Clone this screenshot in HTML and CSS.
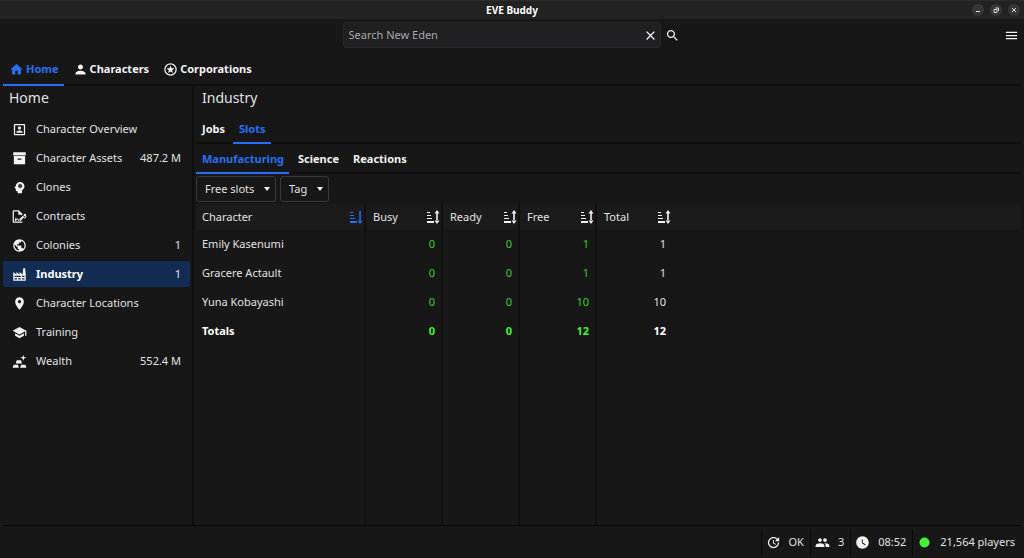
FILE: index.html
```html
<!DOCTYPE html>
<html lang="en">
<head>
    <meta charset="UTF-8">
    <meta name="viewport" content="width=device-width, initial-scale=1.0">
    <title>EVE Buddy</title>
    <link rel="stylesheet" href="styles.css">
</head>
<body>
    <!-- Shared icons -->
    <svg class="sprite" aria-hidden="true">
        <symbol id="sort" viewBox="0 0 14 14">
            <path d="M1 2h3v1H1zM1 5h4v1H1zM1 8h5v1H1zM1 11h7v2H1z"/>
            <path d="M10.200 3h1.600v8h-1.600zM11 0l2.500 3.500h-5zM11 14l2.500-3.500h-5z"/>
        </symbol>
        <symbol id="sort-down" viewBox="0 0 14 14">
            <path d="M1 2h3v1H1zM1 5h4v1H1zM1 8h5v1H1zM1 11h7v2H1z"/>
            <path d="M10.300 1h1.500v10h-1.500zM11 14l2.500-3.500h-5z"/>
        </symbol>
    </svg>

    <header class="titlebar">
        <h1>EVE Buddy</h1>
        <div class="window-buttons">
            <button type="button" aria-label="Minimize"><svg viewBox="0 0 12 12"><path d="M4 7.500h4"/></svg></button>
            <button type="button" aria-label="Restore"><svg viewBox="0 0 12 12"><path d="M4 5.500h3v3H4zM5.500 4h3v3"/></svg></button>
            <button type="button" aria-label="Close"><svg viewBox="0 0 12 12"><path d="M4 4l4 4M8 4l-4 4"/></svg></button>
        </div>
    </header>

    <div class="toolbar">
        <form class="search">
            <div class="search-box">
                <input type="text" aria-label="Search" placeholder="Search New Eden">
                <button type="reset" class="icon-button" aria-label="Clear"><svg class="icon" viewBox="0 0 24 24"><path d="M19 6.410L17.590 5 12 10.590 6.410 5 5 6.410 10.590 12 5 17.590 6.410 19 12 13.410 17.590 19 19 17.590 13.410 12z"/></svg></button>
            </div>
            <button type="button" class="icon-button" aria-label="Search"><svg class="icon" viewBox="0 0 24 24"><path d="M15.500 14h-.79l-.28-.27C15.410 12.590 16 11.110 16 9.500 16 5.910 13.090 3 9.500 3S3 5.910 3 9.500 5.910 16 9.500 16c1.610 0 3.090-.59 4.230-1.570l.27.28v.79l5 4.990L20.490 19l-4.990-5zm-6 0C7.010 14 5 11.990 5 9.500S7.010 5 9.500 5 14 7.010 14 9.500 11.990 14 9.500 14z"/></svg></button>
        </form>
        <button type="button" class="icon-button" aria-label="Menu"><svg class="icon" viewBox="0 0 24 24"><path d="M3 18h18v-2H3v2zm0-5h18v-2H3v2zm0-7v2h18V6H3z"/></svg></button>
    </div>

    <nav class="tabs main-tabs">
        <button type="button" class="tab active"><svg class="icon" viewBox="0 0 24 24"><path d="M10 20v-6h4v6h5v-8h3L12 3 2 12h3v8z"/></svg>Home</button>
        <button type="button" class="tab"><svg class="icon" viewBox="0 0 24 24"><path d="M12 12c2.210 0 4-1.790 4-4s-1.790-4-4-4-4 1.790-4 4 1.790 4 4 4zm0 2c-2.670 0-8 1.340-8 4v2h16v-2c0-2.660-5.330-4-8-4z"/></svg>Characters</button>
        <button type="button" class="tab"><svg class="icon" viewBox="0 0 24 24"><circle cx="12" cy="12" r="9" fill="none" stroke="currentColor" stroke-width="2"/><path d="M12 5.500l1.700 4.300 4.600.3-3.600 2.900 1.200 4.500-3.900-2.500-3.900 2.500 1.200-4.500-3.600-2.900 4.600-.3z"/></svg>Corporations</button>
    </nav>

    <div class="page">
        <aside class="sidebar">
            <h2>Home</h2>
            <nav class="menu">
                <a href="#"><svg class="icon" viewBox="0 0 24 24"><path d="M19 5v14H5V5h14m0-2H5c-1.100 0-2 .9-2 2v14c0 1.100.9 2 2 2h14c1.100 0 2-.9 2-2V5c0-1.100-.9-2-2-2z"/><path d="M12 12c1.400 0 2.500-1.100 2.500-2.500S13.400 7 12 7 9.500 8.100 9.500 9.500 10.600 12 12 12zM17 17v-1c0-1.800-3.300-2.600-5-2.600S7 14.200 7 16v1z"/></svg><span>Character Overview</span></a>
                <a href="#"><svg class="icon" viewBox="0 0 24 24"><path d="M2 2h20v5H2z"/><path fill-rule="evenodd" d="M3 8h18v13H3zM9 12v2h6v-2z"/></svg><span>Character Assets</span><span>487.2 M</span></a>
                <a href="#"><svg class="icon" viewBox="0 0 24 24"><path fill-rule="evenodd" d="M13 3C9.230 3 6.190 5.950 6 9.660L4.080 12.190C3.840 12.500 4.080 13 4.500 13H6V16C6 17.110 6.890 18 8 18H9V21H16V16.310C18.370 15.190 20 12.800 20 10C20 6.140 16.880 3 13 3M12.300 6h1.400l.4 1.500 1.500-.5.8 1.300-1.100 1.200 1.100 1.200-.8 1.300-1.500-.5-.4 1.500h-1.400l-.4-1.500-1.500.5-.8-1.300 1.100-1.200-1.100-1.200.8-1.300 1.500.5zM13 8.600a.9.9 0 1 0 0 1.800.9.9 0 0 0 0-1.800z"/></svg><span>Clones</span></a>
                <a href="#"><svg class="icon" viewBox="0 0 24 24"><path d="M19.700 12.900L14 18.600H11.700V16.300L17.400 10.600L19.700 12.900M23.100 12.100C23.100 12.400 22.800 12.700 22.500 13L20 15.500L19.100 14.600L21.700 12L21.100 11.400L20.400 12.100L18.100 9.800L20.300 7.700C20.500 7.500 20.900 7.500 21.200 7.700L22.600 9.100C22.800 9.300 22.800 9.700 22.600 10C22.400 10.200 22.200 10.400 22.200 10.600C22.200 10.800 22.400 11 22.600 11.200C22.900 11.500 23.200 11.800 23.100 12.100M3 20V4H10V9H15V10.500L17 8.500V8L11 2H3C1.900 2 1 2.900 1 4V20C1 21.100 1.900 22 3 22H15C16.100 22 17 21.100 17 20H3M11 17.100C10.800 17.100 10.600 17.200 10.500 17.200L10 15H8.500L6.400 16.700L7 14H5.500L4.500 19H6L8.900 16.400L9.500 18.700H10.500L11 18.600V17.100Z"/></svg><span>Contracts</span></a>
                <a href="#"><svg class="icon" viewBox="0 0 24 24"><path d="M12 2C6.480 2 2 6.480 2 12s4.480 10 10 10 10-4.480 10-10S17.520 2 12 2zm-1 17.930c-3.950-.49-7-3.850-7-7.930 0-.62.08-1.210.21-1.790L9 15v1c0 1.100.9 2 2 2v1.930zm6.900-2.540c-.26-.81-1-1.390-1.900-1.390h-1v-3c0-.55-.45-1-1-1H8v-2h2c.55 0 1-.45 1-1V7h2c1.100 0 2-.9 2-2v-.41c2.930 1.190 5 4.060 5 7.410 0 2.080-.8 3.970-2.100 5.390z"/></svg><span>Colonies</span><span>1</span></a>
                <a href="#" class="active"><svg class="icon" viewBox="0 0 24 24"><path d="M4 18V20H8V18H4M4 14V16H14V14H4M10 18V20H14V18H10M16 14V16H20V14H16M16 18V20H20V18H16M2 22V8L7 12V8L12 12V8L17 12L18 2H21L22 12V22H2Z"/></svg><span>Industry</span><span>1</span></a>
                <a href="#"><svg class="icon" viewBox="0 0 24 24"><path d="M12 2C8.130 2 5 5.130 5 9c0 5.250 7 13 7 13s7-7.750 7-13c0-3.870-3.130-7-7-7zm0 9.500c-1.380 0-2.500-1.120-2.500-2.500s1.120-2.500 2.500-2.500 2.500 1.120 2.500 2.500-1.120 2.500-2.500 2.500z"/></svg><span>Character Locations</span></a>
                <a href="#"><svg class="icon" viewBox="0 0 24 24"><path d="M5 13.180v4L12 21l7-3.820v-4L12 17l-7-3.820zM12 3L1 9l11 6 9-4.910V17h2V9L12 3z"/></svg><span>Training</span></a>
                <a href="#"><svg class="icon" viewBox="0 0 24 24"><path d="M1 22L2.500 17H9.500L11 22H1M13 22L14.500 17H21.500L23 22H13M6 15L7.500 10H14.500L16 15H6M23 6.050L19.140 7.140L18.050 11L16.960 7.140L13.100 6.050L16.960 4.960L18.050 1.100L19.140 4.960L23 6.050Z"/></svg><span>Wealth</span><span>552.4 M</span></a>
            </nav>
        </aside>

        <main class="content">
            <h2>Industry</h2>
            <nav class="tabs">
                <button type="button" class="tab">Jobs</button>
                <button type="button" class="tab active">Slots</button>
            </nav>
            <nav class="tabs">
                <button type="button" class="tab active">Manufacturing</button>
                <button type="button" class="tab">Science</button>
                <button type="button" class="tab">Reactions</button>
            </nav>

            <div class="filters">
                <div class="select"><select aria-label="Slots filter"><option>Free slots</option></select></div>
                <div class="select"><select aria-label="Tag filter"><option>Tag</option></select></div>
            </div>

            <div class="table-area">
                <table>
                    <thead>
                        <tr>
                            <th class="name"><div class="head">Character<svg class="sort sorted"><use href="#sort-down"/></svg></div></th>
                            <th><div class="head">Busy<svg class="sort"><use href="#sort"/></svg></div></th>
                            <th><div class="head">Ready<svg class="sort"><use href="#sort"/></svg></div></th>
                            <th><div class="head">Free<svg class="sort"><use href="#sort"/></svg></div></th>
                            <th><div class="head">Total<svg class="sort"><use href="#sort"/></svg></div></th>
                            <th class="rest"></th>
                        </tr>
                    </thead>
                    <tbody>
                        <tr><td>Emily Kasenumi</td><td class="ok">0</td><td class="ok">0</td><td class="ok">1</td><td>1</td><td></td></tr>
                        <tr><td>Gracere Actault</td><td class="ok">0</td><td class="ok">0</td><td class="ok">1</td><td>1</td><td></td></tr>
                        <tr><td>Yuna Kobayashi</td><td class="ok">0</td><td class="ok">0</td><td class="ok">10</td><td>10</td><td></td></tr>
                        <tr class="totals"><td>Totals</td><td class="ok">0</td><td class="ok">0</td><td class="ok">12</td><td>12</td><td></td></tr>
                        <tr class="filler"><td></td><td></td><td></td><td></td><td></td><td></td></tr>
                    </tbody>
                </table>
            </div>
        </main>
    </div>

    <footer class="statusbar">
        <div class="status"><svg class="icon" viewBox="0 0 24 24"><path d="M21 10.120h-6.780l2.740-2.820c-2.730-2.700-7.150-2.800-9.880-.1-2.730 2.710-2.730 7.080 0 9.790s7.150 2.710 9.880 0C18.320 15.650 19 14.080 19 12.100h2c0 1.980-.88 4.550-2.640 6.290-3.510 3.480-9.210 3.480-12.720 0-3.500-3.470-3.530-9.110-.02-12.580s9.140-3.470 12.650 0L21 3v7.120zM12.500 8v4.250l3.500 2.080-.72 1.210L11 13V8h1.500z"/></svg>OK</div>
        <div class="status"><svg class="icon" viewBox="0 0 24 24"><path d="M16 11c1.660 0 2.990-1.340 2.990-3S17.660 5 16 5s-3 1.340-3 3 1.340 3 3 3zm-8 0c1.660 0 2.990-1.340 2.990-3S9.660 5 8 5 5 6.340 5 8s1.340 3 3 3zm0 2c-2.330 0-7 1.170-7 3.500V19h14v-2.500c0-2.330-4.670-3.500-7-3.500zm8 0c-.29 0-.62.02-.97.05 1.160.84 1.970 1.970 1.970 3.450V19h6v-2.500c0-2.330-4.670-3.500-7-3.500z"/></svg>3</div>
        <div class="status"><svg class="icon" viewBox="0 0 24 24"><path d="M12 2C6.500 2 2 6.500 2 12s4.500 10 10 10 10-4.500 10-10S17.500 2 12 2m4.200 14.200L11 13V7h1.500v5.200l4.500 2.700-.8 1.300z"/></svg>08:52</div>
        <div class="status"><svg class="icon online" viewBox="0 0 24 24"><circle cx="12" cy="12" r="8"/></svg>21,564 players</div>
    </footer>
</body>
</html>
```
FILE: styles.css
```css
* {
    box-sizing: border-box;
}

body {
    display: flex;
    flex-direction: column;
    height: 100vh;
    margin: 0;
    background-color: #171717;
    color: #e2e2e2;
    font-family: "Noto Sans", sans-serif;
    font-size: 11px;
    line-height: 16px;
}

button,
input,
select {
    font: inherit;
    color: inherit;
}

button {
    padding: 0;
    border: none;
    background: none;
    cursor: pointer;
}

h1,
h2 {
    margin: 0;
    font-weight: normal;
}

h2 {
    padding: 2px 6px 0;
    font-size: 14px;
    line-height: 20px;
}

.sprite {
    display: none;
}

.icon {
    display: block;
    flex: none;
    width: 15px;
    height: 15px;
    fill: #f3f3f3;
}

.icon-button {
    padding: 2px;
}

/* Window title */
.titlebar {
    display: grid;
    grid-template-columns: 1fr auto 1fr;
    align-items: center;
    height: 19px;
    padding: 0 4px;
    background-color: #222;
    border-top: 1px solid #2c2c2c;
}

.titlebar h1 {
    grid-column: 2;
    color: #fff;
    font-size: 10px;
    font-weight: bold;
}

.window-buttons {
    display: flex;
    justify-content: flex-end;
    gap: 6px;
}

.window-buttons button {
    border-radius: 50%;
    background-color: #373737;
}

.window-buttons svg {
    display: block;
    width: 12px;
    height: 12px;
    fill: none;
    stroke: #ddd;
}

/* Search row */
.toolbar {
    display: grid;
    grid-template-columns: 1fr auto 1fr;
    align-items: center;
    padding: 3px 3px 4px;
}

.toolbar > .icon-button {
    grid-column: 3;
    justify-self: end;
}

.search {
    display: flex;
    grid-column: 2;
    align-items: center;
    gap: 2px;
}

.search-box {
    display: flex;
    align-items: center;
    width: 318px;
    height: 26px;
    border: 1px solid #29292b;
    border-radius: 3px;
    background-color: #202022;
}

.search-box input {
    flex: 1;
    min-width: 0;
    padding: 0 5px;
    border: none;
    outline: none;
    background: none;
}

.search-box input::placeholder {
    color: #a8a8a8;
}

/* Tabs */
.tabs {
    display: flex;
    gap: 3px;
    border-bottom: 2px solid #0e0e0e;
}

.tab {
    display: flex;
    align-items: center;
    gap: 2px;
    height: 30px;
    margin-bottom: -2px;
    padding: 2px 5px 0 6px;
    border-bottom: 2px solid transparent;
    color: #f3f3f3;
    font-weight: bold;
}

.tab.active {
    border-color: #296ff6;
    color: #296ff6;
}

.tab.active .icon {
    fill: #296ff6;
}

.main-tabs {
    margin: 0 3px;
}

.main-tabs .tab {
    height: 34px;
}

/* Sidebar */
.page {
    display: flex;
    flex: 1;
    min-height: 0;
}

.sidebar {
    width: 194px;
    padding: 0 2px 0 3px;
    border-right: 2px solid #0e0e0e;
}

.menu {
    display: flex;
    flex-direction: column;
    gap: 3px;
    margin-top: 8px;
}

.menu a {
    display: flex;
    align-items: center;
    height: 26px;
    padding: 0 9px;
    border-radius: 2px;
    color: inherit;
    text-decoration: none;
}

.menu .icon {
    margin-right: 9px;
}

.menu span:nth-of-type(2) {
    margin-left: auto;
}

.menu .active {
    background-color: #122c54;
}

.menu .active span:first-of-type {
    color: #fff;
    font-weight: bold;
}

/* Content */
.content {
    display: flex;
    flex: 1;
    flex-direction: column;
    min-width: 0;
    padding: 0 3px 0 2px;
}

.content h2 {
    margin-bottom: 6px;
}

.filters {
    display: flex;
    gap: 4px;
    padding: 2px 0;
}

.select {
    position: relative;
}

.select::after {
    content: "";
    position: absolute;
    top: 11px;
    right: 6px;
    border: 3px solid transparent;
    border-top: 4px solid #f3f3f3;
    border-bottom: none;
    pointer-events: none;
}

.select select {
    display: block;
    height: 26px;
    padding: 0 20px 0 8px;
    border: 1px solid #393939;
    border-radius: 3px;
    background: none;
    appearance: none;
}

.table-area {
    flex: 1;
    min-height: 0;
}

table {
    width: 100%;
    height: 100%;
    border-collapse: separate;
    border-spacing: 0;
    table-layout: fixed;
}

th,
td {
    width: 77px;
    height: 29px;
    padding: 0 6px 2px;
    border-right: 2px solid #101010;
    text-align: right;
}

th {
    height: 26px;
    padding: 0 1px 0 7px;
    background-color: #1b1b1b;
    font-weight: normal;
}

th:nth-child(n+5),
td:nth-child(n+5) {
    border-right-color: transparent;
}

td:first-child {
    text-align: left;
}

th.name {
    width: 170px;
    padding-left: 6px;
}

th.rest {
    width: auto;
}

.head {
    display: flex;
    align-items: center;
    justify-content: space-between;
}

.sort {
    width: 14px;
    height: 14px;
    fill: #f3f3f3;
}

.sorted {
    fill: #296ff6;
}

.ok {
    color: #3bce30;
}

.totals {
    color: #fff;
    font-weight: bold;
}

.totals .ok {
    color: #43f436;
}

.filler td {
    height: auto;
}

/* Status bar */
.statusbar {
    display: flex;
    justify-content: flex-end;
    margin: 0 3px;
    padding: 3px 0;
    border-top: 1px solid #0a0a0a;
}

.status {
    display: flex;
    align-items: center;
    gap: 8px;
    height: 26px;
    padding: 0 6px 0 4px;
    border-left: 1px solid #0a0a0a;
}

.icon.online {
    fill: #43f436;
}
```
